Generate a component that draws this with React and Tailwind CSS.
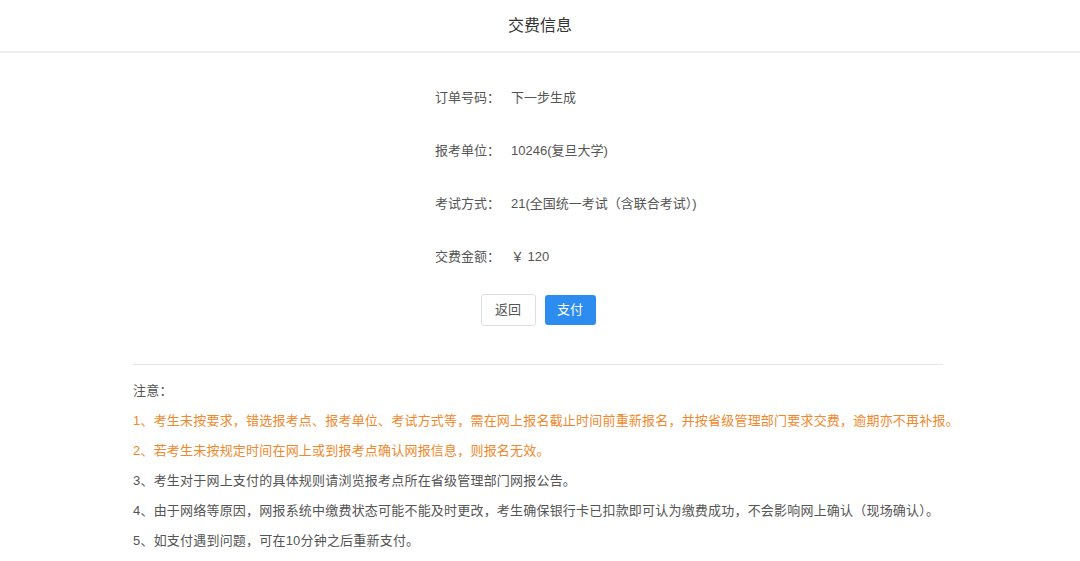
export default function App() {
  const f = { fontFamily: '"Liberation Sans","Noto Sans CJK SC",sans-serif' };
  const rows = [
    ["订单号码：", "下一步生成"],
    ["报考单位：", "10246(复旦大学)"],
    ["考试方式：", "21(全国统一考试（含联合考试）)"],
    ["交费金额：", "￥ 120"],
  ];
  const notes = [
    ["1、考生未按要求，错选报考点、报考单位、考试方式等，需在网上报名截止时间前重新报名，并按省级管理部门要求交费，逾期亦不再补报。", true],
    ["2、若考生未按规定时间在网上或到报考点确认网报信息，则报名无效。", true],
    ["3、考生对于网上支付的具体规则请浏览报考点所在省级管理部门网报公告。", false],
    ["4、由于网络等原因，网报系统中缴费状态可能不能及时更改，考生确保银行卡已扣款即可认为缴费成功，不会影响网上确认（现场确认）。", false],
    ["5、如支付遇到问题，可在10分钟之后重新支付。", false],
  ];
  return (
    <div style={f} className="w-[1080px] h-[561px] bg-white overflow-hidden">
      <div className="h-[53px] border-b-2 border-[#eeeeee] flex items-center justify-center text-[16px] font-normal text-[#333]">交费信息</div>
      <div className="w-[810px] ml-[133px]">
        <div className="pl-[302px] pt-[35px] flex flex-col gap-[34px] text-[13px] text-[#555]">
          {rows.map(([l, v]) => (
            <div key={l} className="flex h-[19px] items-center">
              <span className="w-[76px]">{l}</span>
              <span>{v}</span>
            </div>
          ))}
        </div>
        <div className="flex justify-center gap-[9px] mt-[28px]">
          <button className="w-[55px] h-[32px] border border-[#dcdfe6] rounded-[3px] text-[13px] text-[#555] bg-white">返回</button>
          <button className="w-[51px] h-[30px] mt-[1px] rounded-[3px] text-[13px] text-white bg-[#2d8cf0]">支付</button>
        </div>
        <div className="mt-[38px] border-t border-[#e5e5e5]" />
        <div className="pt-[18px] flex flex-col text-[13px] leading-[30px] text-[#555] whitespace-nowrap tracking-[0.2px]">
          <div className="mt-[-7px]">注意：</div>
          {notes.map(([t, o]) => (
            <div key={t} className={o ? "text-[#f0882b]" : ""}>{t}</div>
          ))}
        </div>
      </div>
    </div>
  );
}
